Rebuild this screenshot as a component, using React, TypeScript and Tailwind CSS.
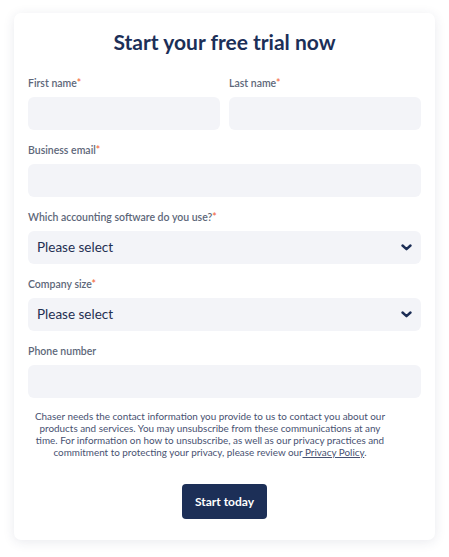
import React from 'react';

const font = { fontFamily: 'Lato, "Open Sans", sans-serif' };

const Label = ({ text, required }: { text: string; required?: boolean }) => (
  <div className="text-[10.5px] font-semibold leading-[13px] text-[#5d6779] mb-[7px]">
    {text}
    {required && <span className="text-[#f26b43]">*</span>}
  </div>
);

const Input = () => <div className="h-[33px] w-full rounded-[6px] bg-[#f3f4f8]" />;

const Select = () => (
  <div className="h-[33px] w-full rounded-[6px] bg-[#f3f4f8] flex items-center justify-between pl-[9px] pr-[9px]">
    <span className="text-[13.5px] text-[#1f2f52]">Please select</span>
    <svg width="11" height="7" viewBox="0 0 11 7" fill="none">
      <path d="M1.5 1.5 L5.5 5.2 L9.5 1.5" stroke="#1b2d55" strokeWidth="2.4" strokeLinecap="round" strokeLinejoin="round" />
    </svg>
  </div>
);

export default function App() {
  return (
    <div className="w-[449px] h-[557px] bg-white pt-[13px] pl-[14px]" style={font}>
      <div className="w-[421px] h-[527px] bg-white rounded-[7px] shadow-[0_2px_12px_rgba(40,50,90,0.10)] px-[14px] pt-[18px] flex flex-col">
        <h1 className="text-center text-[21px] font-bold leading-[22px] text-[#1c2f58]">Start your free trial now</h1>

        <div className="flex gap-[9px] mt-[24px]">
          <div className="flex-1">
            <Label text="First name" required />
            <Input />
          </div>
          <div className="flex-1">
            <Label text="Last name" required />
            <Input />
          </div>
        </div>

        <div className="mt-[14px]">
          <Label text="Business email" required />
          <Input />
        </div>

        <div className="mt-[14px]">
          <Label text="Which accounting software do you use?" required />
          <Select />
        </div>

        <div className="mt-[14px]">
          <Label text="Company size" required />
          <Select />
        </div>

        <div className="mt-[14px]">
          <Label text="Phone number" />
          <Input />
        </div>

        <p className="mt-[12px] pr-[29px] text-center text-[9.9px] leading-[12px] text-[#475171] whitespace-nowrap">
          Chaser needs the contact information you provide to us to contact you about our
          <br />
          products and services. You may unsubscribe from these communications at any
          <br />
          time. For information on how to unsubscribe, as well as our privacy practices and
          <br />
          commitment to protecting your privacy, please review our
          <span className="underline"> Privacy Policy</span>.
        </p>

        <div className="flex justify-center mt-[26px]">
          <button className="w-[85px] h-[35px] rounded-[4px] bg-[#1c2f57] text-white text-[12px] font-bold">Start today</button>
        </div>
      </div>
    </div>
  );
}
